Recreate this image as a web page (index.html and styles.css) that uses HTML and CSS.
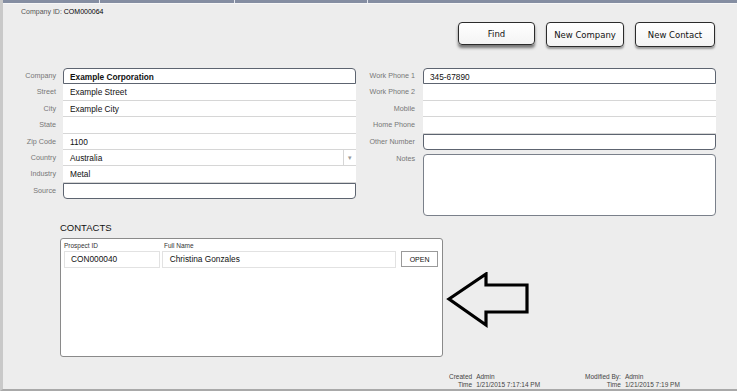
FILE: index.html
```html
<!DOCTYPE html>
<html>
<head>
    <title>Company Details</title>
    <link rel="stylesheet" href="styles.css">
</head>
<body>
    <div class="app">
        <div class="tabs">
            <div class="tab" style="width: 100px"></div>
            <div class="tab" style="width: 135px"></div>
            <div class="tab" style="width: 133px"></div>
            <div class="tab tab-last"></div>
        </div>

        <div class="company-id">Company ID: <span>COM000064</span></div>

        <div class="toolbar">
            <button class="btn btn-default">Find</button>
            <button class="btn">New Company</button>
            <button class="btn">New Contact</button>
        </div>

        <div class="form">
            <div class="fields fields-left">
                <label>Company</label><div class="field first bold">Example Corporation</div>
                <label>Street</label><div class="field">Example Street</div>
                <label>City</label><div class="field">Example City</div>
                <label>State</label><div class="field"></div>
                <label>Zip Code</label><div class="field">1100</div>
                <label>Country</label><div class="field select">Australia<span class="caret">&#9662;</span></div>
                <label>Industry</label><div class="field">Metal</div>
                <label>Source</label><div class="field last"></div>
            </div>
            <div class="fields fields-right">
                <label>Work Phone 1</label><div class="field first">345-67890</div>
                <label>Work Phone 2</label><div class="field"></div>
                <label>Mobile</label><div class="field"></div>
                <label>Home Phone</label><div class="field"></div>
                <label>Other Number</label><div class="field last"></div>
                <label class="notes-label">Notes</label><div class="notes"></div>
            </div>
        </div>

        <div class="contacts-title">CONTACTS</div>
        <div class="contacts-row">
            <div class="contacts">
                <div class="contacts-head">
                    <span class="col-id">Prospect ID</span>
                    <span>Full Name</span>
                </div>
                <div class="contact">
                    <div class="cell col-id">CON000040</div>
                    <div class="cell col-name">Christina Gonzales</div>
                    <button class="open-btn">OPEN</button>
                </div>
            </div>
            <svg class="arrow" width="86" height="60" viewBox="0 0 86 60">
                <polygon points="3,27 40,2 40,13 81,13 81,40 40,40 40,53" fill="none" stroke="#000" stroke-width="3.2" stroke-linejoin="miter"/>
            </svg>
        </div>

        <div class="footer">
            <div class="stamp stamp-created">
                <span class="k">Created</span><span>Admin</span>
                <span class="k">Time</span><span>1/21/2015 7:17:14 PM</span>
            </div>
            <div class="stamp stamp-modified">
                <span class="k">Modified By:</span><span>Admin</span>
                <span class="k">Time</span><span>1/21/2015 7:19 PM</span>
            </div>
        </div>
    </div>
</body>
</html>
```

FILE: styles.css
```css
body {
    margin: 0;
    background-color: #ededed;
    font-family: "Liberation Sans", Arial, sans-serif;
    color: #111;
}
.app {
    width: 737px;
    height: 391px;
    box-sizing: border-box;
    border-left: 3px solid #c9c9c9;
    border-bottom: 2px solid #a9a9a9;
    background-color: #ededed;
    overflow: hidden;
}
/* Top strip */
.tabs {
    display: flex;
    height: 3px;
    margin-left: -3px;
    background-color: #858ea2;
    border-bottom: 1px solid #f7f7f7;
}
.tab {
    height: 3px;
    box-sizing: border-box;
    border-right: 1px solid #e4e7ee;
}
.tab-last {
    flex-grow: 1;
    border-right: none;
}
.company-id {
    margin: 4px 0 0 18px;
    font-size: 7px;
    line-height: 8px;
    color: #555;
}
.company-id span {
    color: #000;
}
/* Buttons */
.toolbar {
    display: flex;
    justify-content: flex-end;
    align-items: flex-start;
    gap: 11px;
    margin-top: 6px;
    padding-right: 22px;
}
.btn {
    height: 25px;
    padding: 0;
    border: 1px solid #2b2b2b;
    border-radius: 4px;
    background: linear-gradient(#ffffff, #f4f4f4);
    box-shadow: 0 2px 2px rgba(0, 0, 0, 0.35);
    font-family: "DejaVu Sans", Verdana, sans-serif;
    font-size: 8.5px;
    color: #111;
}
.btn-default {
    width: 77px;
    height: 23px;
    box-shadow: 0 3px 3px rgba(0, 0, 0, 0.5);
}
.btn:nth-child(2) {
    width: 78px;
}
.btn:nth-child(3) {
    width: 80px;
}
/* Form */
.form {
    display: flex;
    margin-top: 21px;
}
.fields {
    display: grid;
    grid-auto-rows: 16.4px;
    align-items: stretch;
}
.fields-left {
    grid-template-columns: 53px 293px;
    column-gap: 7px;
}
.fields-right {
    margin-left: 4px;
    grid-template-columns: 55px 293px;
    column-gap: 8px;
}
.fields label {
    text-align: right;
    font-size: 7.2px;
    line-height: 16.4px;
    color: #777;
    white-space: nowrap;
}
.field {
    position: relative;
    background-color: #fff;
    border-bottom: 1px solid #d6d6d6;
    padding-left: 7px;
    font-size: 8.3px;
    line-height: 16px;
    box-sizing: border-box;
}
.field.first {
    border: 1px solid #5d6470;
    border-radius: 4px 4px 0 0;
    padding-left: 6px;
}
.field.last {
    border: 1px solid #5d6470;
    border-radius: 0 0 4px 4px;
}
.bold {
    font-weight: bold;
}
.caret {
    position: absolute;
    right: 0;
    top: 0;
    width: 12px;
    height: 15px;
    border-left: 1px solid #d6d6d6;
    text-align: center;
    font-size: 7px;
    color: #999;
}
.notes-label {
    margin-top: 4px;
    line-height: 10px !important;
    align-self: start;
}
.notes {
    grid-row: span 4;
    margin-top: 4px;
    height: 62px;
    background-color: #fff;
    border: 1px solid #7a808a;
    border-radius: 4px;
    box-sizing: border-box;
}
/* Contacts */
.contacts-title {
    margin: 7px 0 0 57px;
    font-size: 9.5px;
    line-height: 10px;
    color: #111;
}
.contacts-row {
    display: flex;
    align-items: flex-start;
    margin-top: 5px;
}
.contacts {
    width: 383px;
    height: 119px;
    margin-left: 57px;
    box-sizing: border-box;
    background-color: #fff;
    border: 1px solid #8a8a8a;
    border-radius: 3px;
    padding: 3px 4px 0 3px;
}
.contacts-head {
    display: flex;
    font-size: 6.5px;
    line-height: 8px;
    color: #333;
}
.contacts-head .col-id {
    width: 100px;
}
.contact {
    display: flex;
    align-items: center;
    margin-top: 1px;
}
.cell {
    height: 17px;
    box-sizing: border-box;
    border: 1px solid #e2e2e2;
    font-size: 8.3px;
    line-height: 15px;
}
.cell.col-id {
    width: 96px;
    padding-left: 6px;
}
.cell.col-name {
    width: 235px;
    margin-left: 2px;
    padding-left: 7px;
}
.open-btn {
    width: 37px;
    height: 16px;
    margin-left: 5px;
    padding: 0;
    border: 1px solid #9a9a9a;
    background-color: #fff;
    font-family: "Liberation Sans", Arial, sans-serif;
    font-size: 7px;
    color: #111;
}
.arrow {
    margin: 34px 0 0 3px;
}
/* Footer */
.footer {
    display: flex;
    margin-top: 16px;
}
.stamp {
    display: grid;
    grid-template-columns: auto auto;
    column-gap: 4px;
    font-size: 6.5px;
    line-height: 8px;
    color: #444;
}
.stamp .k {
    text-align: right;
}
.stamp-created {
    margin-left: 446px;
}
.stamp-modified {
    margin-left: 45px;
}
```
